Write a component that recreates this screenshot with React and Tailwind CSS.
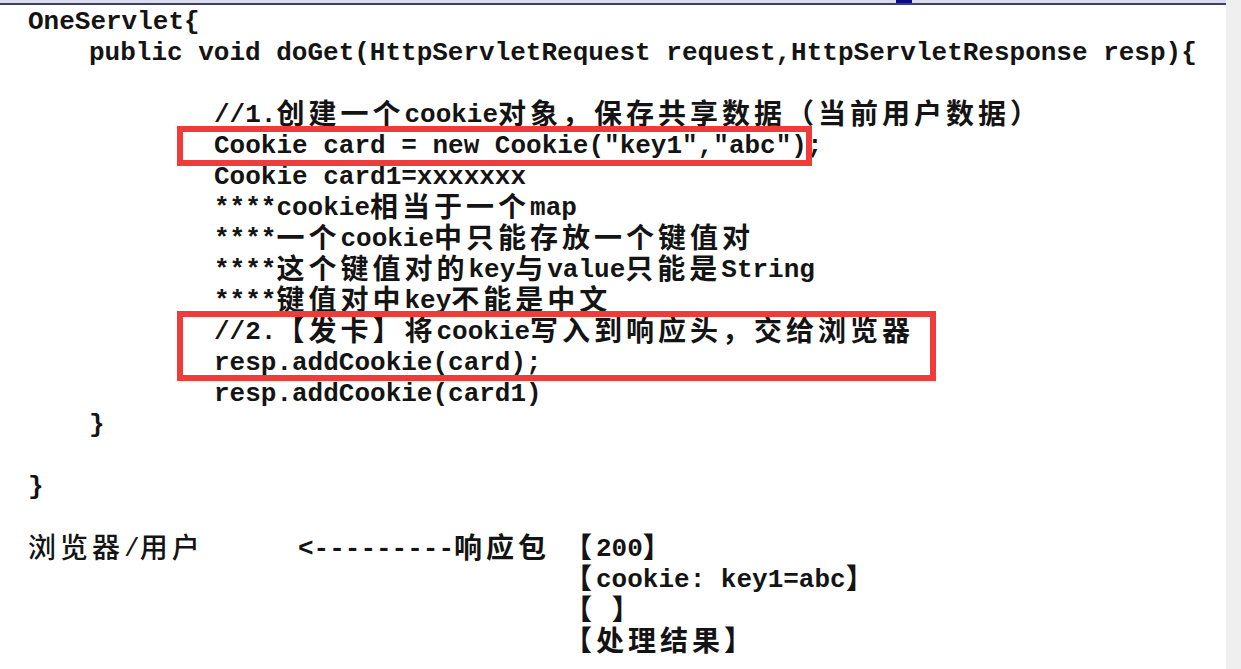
const cjkRun = /([\u3000-\u303f\u4e00-\u9fff\uff00-\uffef]+)/;

// CJK runs: wider glyphs, baseline matched to the mono text, box kept to one 31px line
function Line({ text, className = '' }) {
    const parts = text.split(cjkRun);
    return (
        <div className={`h-[31px] whitespace-pre ${className}`}>
            {parts.map((part, i) =>
                i % 2 === 1 ? (
                    <span
                        key={i}
                        className="relative top-[2px] inline-block h-[29px] font-['Noto_Sans_CJK_SC',sans-serif] text-[28px] leading-[20px] tracking-[4px]"
                    >
                        {part}
                    </span>
                ) : (
                    part
                ),
            )}
        </div>
    );
}

const notes = [
    'Cookie card1=xxxxxxx',
    '****cookie相当于一个map',
    '****一个cookie中只能存放一个键值对',
    '****这个键值对的key与value只能是String',
    '****键值对中key不能是中文',
];

const responseParts = ['【200】', '【cookie: key1=abc】', '【 】', '【处理结果】'];

export default function App() {
    return (
        <div className="flex h-[669px] w-full overflow-hidden bg-white">
            <main className="flex min-w-0 flex-1 flex-col">
                {/* slide frame edge */}
                <div className="h-[3px] bg-[#dcdcf0]">
                    <div className="ml-[896px] h-[4px] w-[16px] bg-[#0b0b8a]" />
                </div>
                <div className="h-[2px] bg-[#3d3d6e]" />

                <div className="pl-[28px] pt-[2px] font-['Liberation_Mono','Noto_Sans_CJK_SC',monospace] text-[26px] font-bold leading-[31px] text-[#141414]">
                    <Line text="OneServlet{" />
                    <Line className="pl-[61px]" text="public void doGet(HttpServletRequest request,HttpServletResponse resp){" />
                    <div className="h-[31px]" />

                    <div className="pl-[186px]">
                        <Line text="//1.创建一个cookie对象，保存共享数据（当前用户数据）" />
                        <div className="relative">
                            <Line text='Cookie card = new Cookie("key1","abc");' />
                            <div className="absolute -left-[37px] -top-[5px] h-[40px] w-[635px] border-[6px] border-[#f03b3b]" />
                        </div>
                        {notes.map((note) => (
                            <Line key={note} text={note} />
                        ))}
                        <div className="relative">
                            <Line text="//2.【发卡】将cookie写入到响应头，交给浏览器" />
                            <Line text="resp.addCookie(card);" />
                            <div className="absolute -left-[37px] -top-[6px] h-[70px] w-[759px] border-[6px] border-[#f03b3b]" />
                        </div>
                        <Line text="resp.addCookie(card1)" />
                    </div>

                    <Line className="pl-[61px]" text="}" />
                    <div className="h-[31px]" />
                    <Line text="}" />
                    <div className="h-[31px]" />

                    <div className="grid grid-cols-[270px_266px_1fr]">
                        <Line className="font-medium" text="浏览器/用户" />
                        <Line text="<---------响应包" />
                        <div className="flex flex-col">
                            {responseParts.map((part) => (
                                <Line key={part} text={part} />
                            ))}
                        </div>
                    </div>
                </div>
            </main>
            <aside className="w-[15px] shrink-0 bg-[#efefef]" />
        </div>
    );
}
